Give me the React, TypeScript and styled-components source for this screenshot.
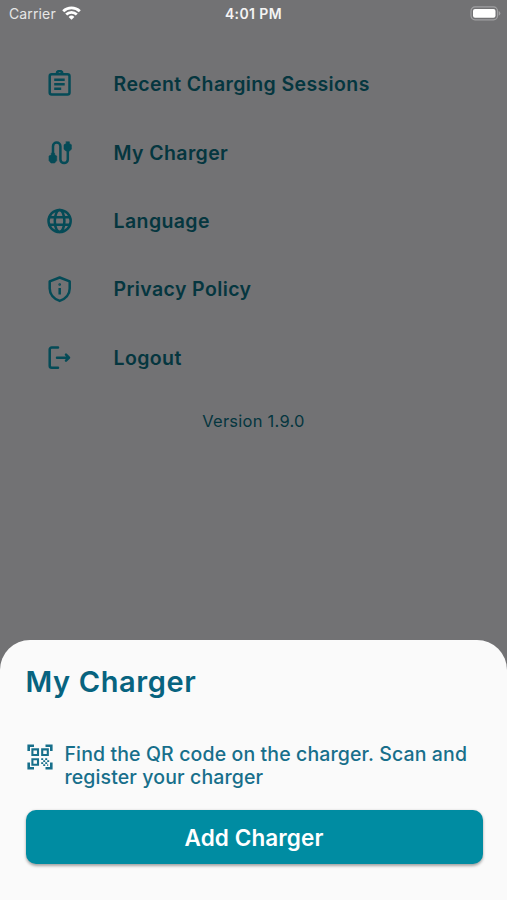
import React from "react";
import styled, { createGlobalStyle } from "styled-components";

const GlobalStyle = createGlobalStyle`
  *, *::before, *::after { box-sizing: border-box; }
  body { margin: 0; background: #727274; }
`;

const Screen = styled.div`
  display: flex;
  flex-direction: column;
  width: 507px;
  height: 900px;
  overflow: hidden;
  background: #727274;
  font-family: Inter, "Liberation Sans", sans-serif;
`;

const StatusBar = styled.header`
  display: grid;
  grid-template-columns: 1fr auto 1fr;
  align-items: center;
  height: 26px;
  padding: 0 6px 0 9px;
  color: #f4f4f4;
`;

const Carrier = styled.div`
  display: flex;
  align-items: center;
  gap: 6px;
  font-size: 14px;
  letter-spacing: 0.13px;
  color: #e6e6e6;
`;

const Clock = styled.time`
  margin-right: 3px;
  font-size: 14px;
  font-weight: 600;
  letter-spacing: 0.4px;
`;

const Battery = styled.svg`
  justify-self: end;
`;

const Menu = styled.nav`
  display: flex;
  flex-direction: column;
  padding-top: 24px;
`;

const MenuItem = styled.a`
  display: flex;
  align-items: center;
  gap: 41px;
  height: 68.4px;
  padding-left: 44.6px;
  color: #05363f;
`;

const MenuIcon = styled.svg`
  flex: none;
  width: 28px;
  height: 28px;
  fill: none;
  stroke: #054b57;
  stroke-width: 2.5;
  stroke-linecap: round;
  stroke-linejoin: round;
`;

const MenuLabel = styled.span`
  font-size: 19.5px;
  font-weight: 600;
  line-height: 24px;
  letter-spacing: 0.38px;
  white-space: nowrap;
`;

const Version = styled.p`
  margin: 19px 0 0;
  text-align: center;
  font-size: 16.5px;
  line-height: 20px;
  letter-spacing: 0.25px;
  color: #05363f;
`;

const Sheet = styled.section`
  display: flex;
  flex-direction: column;
  height: 260.5px;
  margin-top: auto;
  padding: 24px 24.5px 0 25.5px;
  border-radius: 30px 30px 0 0;
  background: #fafafa;
  color: #07637f;
`;

const Title = styled.h1`
  margin: 0;
  font-size: 29px;
  font-weight: 600;
  line-height: 36px;
  letter-spacing: 0.6px;
`;

const Hint = styled.div`
  display: flex;
  gap: 12px;
  margin-top: 43px;
  padding-left: 1px;
`;

const HintText = styled.p`
  margin: 0;
  font-size: 19.5px;
  font-weight: 500;
  line-height: 23px;
  letter-spacing: 0.12px;
  white-space: nowrap;
  color: #176f8b;
`;

const QrIcon = styled.svg`
  flex: none;
  width: 26px;
  height: 26px;
  margin-top: 1px;
  fill: none;
  stroke: #176f8b;
  stroke-width: 2.6;
`;

const AddButton = styled.button`
  height: 54px;
  margin-top: 21px;
  padding: 2px 0 0;
  border: 0;
  border-radius: 10px;
  background: #008ca2;
  box-shadow: 0 1.5px 3px rgba(0, 0, 0, 0.35);
  color: #fff;
  font: 600 22.5px/28px Inter, "Liberation Sans", sans-serif;
  letter-spacing: 0.1px;
`;

const items = [
  {
    label: "Recent Charging Sessions",
    icon: (
      <>
        <rect x="4.7" y="4.2" width="19.8" height="20.2" rx="2" />
        <path d="M11.8 3.8a2.8 2.8 0 0 1 5.6 0" />
        <path d="M9.2 9.7h10.5M9.2 14.2h10.5M9.2 18.7h7" strokeLinecap="butt" />
      </>
    ),
  },
  {
    label: "My Charger",
    icon: (
      <>
        <path d="M8 18V7.2a3.7 3.7 0 0 1 7.4 0v13.2a3.7 3.7 0 0 0 7.4 0V9" />
        <path
          d="M6.4 14.2h3.2v1.6l2.1 1.2v4.6l-2.1 2.4H6l-2-2.400V17l2.400-1.200zM21.200 2.800h3.200v1.600l2 1.400v4.400L24.400 12h-3.400l-2-1.800V5.800l2.200-1.400z"
          fill="#054b57"
          strokeWidth="0.6"
        />
      </>
    ),
  },
  {
    label: "Language",
    icon: (
      <>
        <circle cx="14.6" cy="14" r="11.1" />
        <ellipse cx="14.6" cy="14" rx="4.8" ry="11.1" />
        <path d="M4.6 10.2h20M4.6 17.8h20" />
      </>
    ),
  },
  {
    label: "Privacy Policy",
    icon: (
      <>
        <path d="M14.7 2.5 24.7 6.4v7.1c0 5.9-4.2 10.5-10 12.4-5.8-1.9-10-6.5-10-12.4V6.4z" />
        <path d="M14.7 13v6.500" strokeLinecap="butt" />
        <circle cx="14.7" cy="9.500" r="0.5" strokeWidth="1.7" />
      </>
    ),
  },
  {
    label: "Logout",
    icon: (
      <>
        <path d="M13 3.600H6.700a2 2 0 0 0-2 2v16.200a2 2 0 0 0 2 2H13" />
        <path d="M12 13.700h12M21 10.700l3 3-3 3" />
      </>
    ),
  },
];

export default function App() {
  return (
    <>
      <GlobalStyle />
      <Screen>
        <StatusBar>
          <Carrier>
            Carrier
            <svg width="19" height="14" viewBox="0 0 19 14" fill="none" stroke="#fff" strokeWidth="2.8">
              <path d="M1.2 5.300a11.900 11.900 0 0 1 16.600 0M4.200 8.500a7.600 7.600 0 0 1 10.600 0" />
              <path d="M6.6 10.900a4.100 4.100 0 0 1 5.800 0L9.500 13.800z" fill="#fff" stroke="none" />
            </svg>
          </Carrier>
          <Clock>4:01 PM</Clock>
          <Battery width="31" height="15" viewBox="0 0 31 15">
            <rect x="1" y="0.9" width="26.5" height="12.9" rx="4" fill="none" stroke="#a0a0a2" strokeWidth="1.2" />
            <rect x="3" y="2.9" width="22.5" height="8.9" rx="2" fill="#fff" />
            <path d="M28.700 5a2.500 2.500 0 0 1 0 4.700z" fill="#a0a0a2" />
          </Battery>
        </StatusBar>
        <Menu>
          {items.map(({ label, icon }) => (
            <MenuItem key={label}>
              <MenuIcon viewBox="0 0 28 28">{icon}</MenuIcon>
              <MenuLabel>{label}</MenuLabel>
            </MenuItem>
          ))}
        </Menu>
        <Version>Version 1.9.0</Version>
        <Sheet>
          <Title>My Charger</Title>
          <Hint>
            <QrIcon viewBox="0 0 26 26">
              <path d="M1.700 7V1.700H7M18.500 1.700h5.800V7M1.700 18.500v5.800H7M18.500 24.300h5.800v-5.800" />
              <path d="M5.400 5.400h5.600v5.600H5.400zM15.200 5.400h5.600v5.600h-5.600zM5.400 15.200h5.600v5.600H5.400z" strokeWidth="2.1" />
              <path
                d="M14.200 15.200h2M18.200 15.200h2M16.200 17.200h2M20.200 17.200h2M14.200 19.200h2M18.200 19.200h2M16.200 21.200h2M20.200 21.200h1"
                strokeWidth="1.8"
              />
            </QrIcon>
            <HintText>
              Find the QR code on the charger. Scan and
              <br />
              register your charger
            </HintText>
          </Hint>
          <AddButton>Add Charger</AddButton>
        </Sheet>
      </Screen>
    </>
  );
}
